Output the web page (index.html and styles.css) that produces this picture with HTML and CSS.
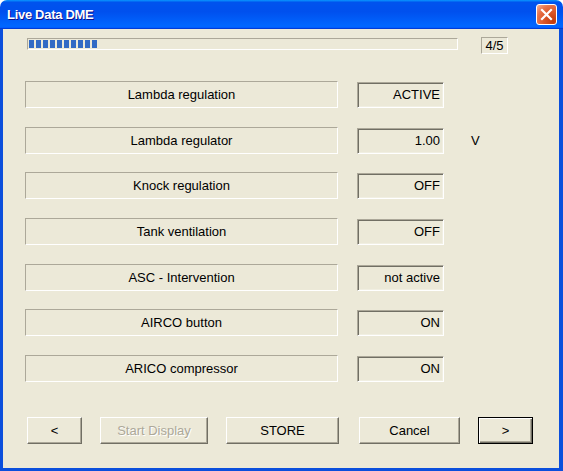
FILE: index.html
```html
<!DOCTYPE html>
<html>
<head>
<meta charset="UTF-8"/>
<title>Live Data DME</title>
<link rel="stylesheet" href="styles.css">
</head>
<body>
<div class="window">
    <div class="titlebar">
        <span class="title">Live Data DME</span>
        <button class="close" aria-label="Close">
            <svg width="13" height="13" viewBox="0 0 13 13">
                <path d="M2 2 L11 11 M11 2 L2 11" stroke="#fff" stroke-width="2.2" stroke-linecap="square"/>
            </svg>
        </button>
    </div>
    <div class="client">
        <div class="progress-row">
            <div class="progress"><div class="fill" style="width:68px"></div></div>
            <div class="counter">4/5</div>
        </div>

        <div class="values">
            <div class="label">Lambda regulation</div>
            <div class="value">ACTIVE</div>
            <div class="unit"></div>

            <div class="label">Lambda regulator</div>
            <div class="value">1.00</div>
            <div class="unit">V</div>

            <div class="label">Knock regulation</div>
            <div class="value">OFF</div>
            <div class="unit"></div>

            <div class="label">Tank ventilation</div>
            <div class="value">OFF</div>
            <div class="unit"></div>

            <div class="label">ASC - Intervention</div>
            <div class="value">not active</div>
            <div class="unit"></div>

            <div class="label">AIRCO button</div>
            <div class="value">ON</div>
            <div class="unit"></div>

            <div class="label">ARICO compressor</div>
            <div class="value">ON</div>
            <div class="unit"></div>
        </div>

        <div class="buttons">
            <button class="btn btn-prev">&lt;</button>
            <button class="btn btn-start" disabled>Start Display</button>
            <button class="btn btn-store">STORE</button>
            <button class="btn btn-cancel">Cancel</button>
            <button class="btn btn-next default">&gt;</button>
        </div>
    </div>
</div>
</body>
</html>
```

FILE: styles.css
```css
body {
    margin: 0;
    background: #fff;
    font-family: "Liberation Sans", Arial, sans-serif;
    font-size: 13px;
    color: #000;
}

.window {
    width: 563px;
    height: 471px;
    display: flex;
    flex-direction: column;
}

/* luna style caption */
.titlebar {
    height: 29px;
    flex: none;
    box-sizing: border-box;
    display: flex;
    align-items: center;
    justify-content: space-between;
    padding: 0 6px 0 7px;
    border-radius: 7px 7px 0 0;
    background: linear-gradient(180deg, #0997ff, #0053ee 8%, #0050ee 40%, #06f 88%, #06f 93%, #005bff 95%, #003dd7 96%, #003dd7);
}
.title {
    color: #fff;
    font-weight: bold;
    font-size: 13px;
    letter-spacing: -0.3px;
    text-shadow: 1px 1px #0f1089;
}
.close {
    width: 21px;
    height: 21px;
    padding: 0;
    display: flex;
    align-items: center;
    justify-content: center;
    border: 1px solid #fff;
    border-radius: 3px;
    background: radial-gradient(circle at 85% 85%, #c13a0c 0%, #dd5a2c 45%, #e8734b 70%, #f6b59c 100%);
}

.client {
    flex: 1;
    background: #ece9d8;
    border: solid #0b4fdc;
    border-width: 0 4px 3px 3px;
    padding: 8px 0 0 22px;
}

/* progress + page counter */
.progress-row {
    display: flex;
    align-items: flex-start;
}
.progress {
    width: 431px;
    height: 12px;
    margin: 1px 0 0 2px;
    box-sizing: border-box;
    border: 1px solid;
    border-color: #aca899 #fff #fff #aca899;
    padding: 1px;
}
.fill {
    height: 100%;
    background: repeating-linear-gradient(90deg, #316ac5 0 5px, transparent 5px 7px);
}
.counter {
    width: 27px;
    height: 17px;
    margin-left: 23px;
    box-sizing: border-box;
    border: 1px solid;
    border-color: #aca899 #fff #fff #aca899;
    text-align: center;
    line-height: 15px;
}

/* rows of labels and readings */
.values {
    margin-top: 27px;
    display: grid;
    grid-template-columns: 313px 87px 40px;
    column-gap: 19px;
    grid-auto-rows: 27px;
    row-gap: 18.7px;
}
.label {
    box-sizing: border-box;
    border: 1px solid;
    border-color: #aca899 #fff #fff #aca899;
    text-align: center;
    line-height: 25px;
}
.value {
    height: 26px;
    margin-top: 1px;
    box-sizing: border-box;
    border: 1px solid;
    border-color: #aca899 #fff #fff #aca899;
    box-shadow: inset 1px 1px #716f64, inset -1px -1px #f1efe2;
    text-align: right;
    padding-right: 3px;
    line-height: 24px;
}
.unit {
    padding-left: 8px;
    line-height: 28px;
}

/* bottom buttons */
.buttons {
    margin: 35px 0 0 2px;
    display: flex;
    gap: 18px;
}
.btn {
    height: 27px;
    box-sizing: border-box;
    padding: 0;
    font-family: inherit;
    font-size: 13px;
    color: #000;
    background: #ece9d8;
    border: 1px solid;
    border-color: #fff #716f64 #716f64 #fff;
    box-shadow: inset -1px -1px #aca899;
}
.btn:disabled {
    color: #aca899;
    text-shadow: 1px 1px #fff;
}
.btn.default {
    border-color: #000;
    box-shadow: inset 1px 1px #fff, inset -1px -1px #716f64, inset -2px -2px #aca899;
}
.btn-prev,
.btn-next {
    width: 55px;
}
.btn-start {
    width: 108px;
}
.btn-store {
    width: 113px;
}
.btn-cancel {
    width: 101px;
    margin-left: 2px;
}
```
